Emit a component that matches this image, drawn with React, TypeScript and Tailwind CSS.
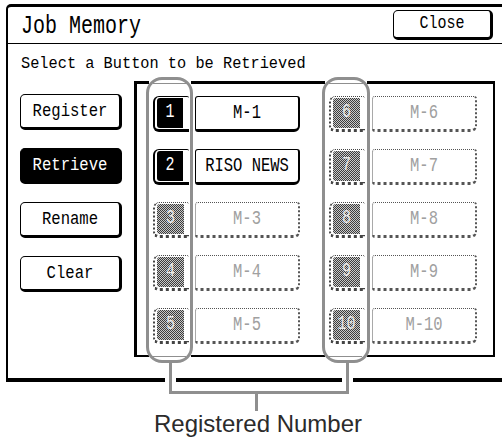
import React from "react";

const G = "#8f8f8f";

function Lcd({ children, s = "" }: { children: React.ReactNode; s?: string }) {
  return <span className={"inline-block whitespace-pre " + s}>{children}</span>;
}

function LeftBtn({ label, active }: { label: string; active?: boolean }) {
  return (
    <div
      className={
        "h-[36px] w-[102px] rounded-[5px] border border-r-[3px] border-b-[3px] border-black flex items-center justify-center text-[15.6px] leading-[20px] " +
        (active ? "bg-black text-white" : "bg-white text-black")
      }
    >
      <Lcd s="scale-y-[1.15]">{label}</Lcd>
    </div>
  );
}

function NumBox({ n, on }: { n: number; on: boolean }) {
  if (on) {
    return (
      <div className="h-[36px] w-[36px] shrink-0 border-t border-l-2 border-b-[3px] border-black rounded-l-[6px] rounded-tr-[2px] pt-[1px] pl-[2px] pb-[1px] flex bg-white">
        <div className="w-[26px] h-full bg-black rounded-l-[3px] flex items-center justify-center text-white text-[15px] leading-[20px]">
          <Lcd s="scale-y-[1.3]">{n}</Lcd>
        </div>
      </div>
    );
  }
  return (
    <div className="h-[36px] w-[36px] shrink-0 border-t border-l-2 border-b-[3px] border-dotted border-[#444] rounded-l-[6px] rounded-tr-[2px] pt-[1px] pl-[2px] pb-[1px] flex bg-white">
      <div className="w-[27px] h-full rounded-l-[3px] bg-[repeating-conic-gradient(#3c3c3c_0%_25%,#c8c8c8_0%_50%)] bg-[length:2px_2px] flex items-center justify-center text-[#e8e8e8] text-[15px] leading-[20px]">
        <Lcd s="scale-y-[1.3]">{n}</Lcd>
      </div>
    </div>
  );
}

function NameBox({ label, on }: { label: string; on: boolean }) {
  return (
    <div
      className={
        "h-[36px] w-[105px] shrink-0 border border-r-2 border-b-[3px] rounded-[3px] rounded-br-[6px] flex items-center justify-center text-[15.5px] leading-[20px] bg-white " +
        (on ? "border-black text-black" : "border-dotted border-[#555] text-[#a0a0a0]")
      }
    >
      <Lcd s="scale-y-[1.25]">{label}</Lcd>
    </div>
  );
}

function Row({ n, label, on, gap }: { n: number; label: string; on: boolean; gap: string }) {
  return (
    <div className={"flex " + gap}>
      <NumBox n={n} on={on} />
      <NameBox label={label} on={on} />
    </div>
  );
}

export default function App() {
  const col1 = [
    { n: 1, l: "M-1", on: true },
    { n: 2, l: "RISO NEWS", on: true },
    { n: 3, l: "M-3", on: false },
    { n: 4, l: "M-4", on: false },
    { n: 5, l: "M-5", on: false },
  ];
  const col2 = [6, 7, 8, 9, 10].map((n) => ({ n, l: "M-" + n, on: false }));

  return (
    <div className="relative w-[502px] h-[439px] bg-white overflow-hidden font-['Liberation_Mono',monospace] text-black">
      {/* Screen frame */}
      <div className="ml-[6px] mt-[4px] w-[496px] h-[378px] border-t-[3px] border-l-2 border-b-[4px] border-black rounded-tl-[5px] flex flex-col">
        {/* Header */}
        <div className="h-[37px] shrink-0 border-b border-black flex items-start justify-between pl-[13px] pr-[9px]">
          <div className="mt-[7px] text-[20px] leading-[24px]">
            <Lcd s="scale-y-[1.3]">Job Memory</Lcd>
          </div>
          <div className="mt-[3px] h-[30px] w-[100px] rounded-[5px] border border-r-[3px] border-b-[3px] border-black flex items-center justify-center text-[15px] leading-[20px]">
            <Lcd s="scale-y-[1.2]">Close</Lcd>
          </div>
        </div>
        {/* Body */}
        <div className="pt-[10px] pl-[13px] text-[15.3px] leading-[20px]">
          <Lcd s="scale-y-[1.1]">Select a Button to be Retrieved</Lcd>
        </div>
        <div className="mt-[7px] pl-[12px] flex">
          <div className="flex flex-col gap-[18px] pt-[13px]">
            <LeftBtn label="Register" />
            <LeftBtn label="Retrieve" active />
            <LeftBtn label="Rename" />
            <LeftBtn label="Clear" />
          </div>
          <div className="ml-[12px] w-[361px] h-[276px] border-t-[3px] border-l-[3px] border-r-2 border-b-2 border-black pt-[12px] pl-[16px] flex gap-[29px]">
            <div className="flex flex-col gap-[17px]">
              {col1.map((r) => (
                <Row key={r.n} n={r.n} label={r.l} on={r.on} gap="gap-[6px]" />
              ))}
            </div>
            <div className="flex flex-col gap-[17px]">
              {col2.map((r) => (
                <Row key={r.n} n={r.n} label={r.l} on={r.on} gap="gap-[7px]" />
              ))}
            </div>
          </div>
        </div>
      </div>

      {/* Callout label */}
      <div className="mt-[30px] pl-[14px] flex justify-center font-['Liberation_Sans',Arial,sans-serif] text-[24px] leading-[24px] text-[#2b2b2b]">
        Registered Number
      </div>

      {/* Bracket overlays */}
      {[146, 322].map((x, i) => (
        <React.Fragment key={x}>
          <div
            className="absolute top-[81px] h-[3px] bg-white"
            style={{ left: x + 3, width: 42 }}
          />
          <div className="absolute top-[83px] h-px" style={{ left: x + 7, width: 34, background: G }} />
          <div className="absolute top-[355px] h-[2px] bg-white" style={{ left: x + 3, width: 42 }} />
          <div className="absolute top-[356px] h-px" style={{ left: x + 6, width: 34, background: G }} />
          <div
            className="absolute top-[77px] h-[286px] rounded-[16px] border-[3px]"
            style={{ left: x, width: i === 0 ? 47 : 48, borderColor: G }}
          />
          {/* white halo over frame border */}
          <div className="absolute top-[377px] h-[8px] w-[11px] bg-white" style={{ left: x + 19 + i }} />
          <div className="absolute top-[363px] h-[31px] w-[3px]" style={{ left: x + 23 + i, background: G }} />
        </React.Fragment>
      ))}
      <div className="absolute top-[391px] left-[169px] w-[180px] h-[3px]" style={{ background: G }} />
      <div className="absolute top-[391px] left-[255px] w-[3px] h-[20px]" style={{ background: G }} />
    </div>
  );
}
